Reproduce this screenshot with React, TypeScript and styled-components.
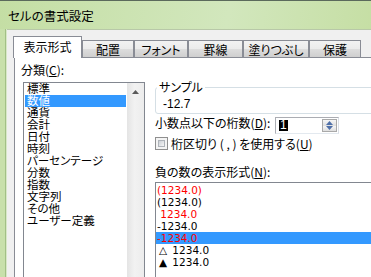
import React from "react";
import styled, { createGlobalStyle } from "styled-components";

const GlobalStyle = createGlobalStyle`
  html, body {
    margin: 0;
    padding: 0;
  }
  body {
    font-family: "Liberation Sans", "Noto Sans CJK JP", sans-serif;
    font-size: 12px;
    color: #000;
    font-feature-settings: "palt";
  }
`;

const Window = styled.div`
  width: 371px;
  height: 277px;
  overflow: hidden;
  box-sizing: border-box;
  border-top: 1px solid #5b6a5c;
  background: linear-gradient(100deg, #c4dea4 0%, #d2e7bd 55%, #c2dc9d 100%);
  display: flex;
  flex-direction: column;
`;

const TitleBar = styled.div`
  height: 28px;
  flex: none;
  display: flex;
  align-items: center;
  padding-left: 8px;
  font-family: "Noto Sans CJK JP", sans-serif;
  font-size: 12.5px;
`;

const Frame = styled.div`
  flex: 1;
  display: flex;
  min-height: 0;
`;

const FrameEdge = styled.div`
  width: 7px;
  flex: none;
  background: linear-gradient(to right, #c8e0ab 0 5px, #a2c086 5px 6px, #d8e8c8 6px);
`;

const Client = styled.div`
  flex: 1;
  display: flex;
  flex-direction: column;
  min-width: 0;
  background: #f0f0f0;
  border-top: 1px solid #b8c8a8;
`;

const TabRow = styled.div`
  display: flex;
  align-items: flex-end;
  height: 21px;
  margin-top: 6px;
  padding-left: 6px;
  position: relative;
  z-index: 1;
  flex: none;
`;

const Tab = styled.div<{ $active?: boolean; $w: number }>`
  box-sizing: border-box;
  width: ${(p) => p.$w}px;
  height: ${(p) => (p.$active ? 22 : 17)}px;
  margin-bottom: ${(p) => (p.$active ? -1 : 0)}px;
  border: 1px solid #898c95;
  border-bottom: none;
  background: ${(p) =>
    p.$active
      ? "#fff"
      : "linear-gradient(to bottom, #f2f2f2 0%, #ebebeb 50%, #dddddd 51%, #cfcfcf 100%)"};
  display: flex;
  align-items: center;
  justify-content: center;
  font-family: "Noto Sans CJK JP", sans-serif;
  font-size: 12px;
  line-height: 12px;
  padding-bottom: ${(p) => (p.$active ? 2 : 0)}px;
  padding-top: ${(p) => (p.$active ? 0 : 1)}px;
`;

const Panel = styled.div`
  flex: 1;
  margin-left: 7px;
  background: #fff;
  border-top: 1px solid #898c95;
  border-left: 1px solid #898c95;
  display: grid;
  grid-template-columns: 124px 1fr;
  column-gap: 10px;
  padding: 5px 0 0 6px;
  overflow: hidden;
  min-height: 0;
`;

const Column = styled.div`
  display: flex;
  flex-direction: column;
  min-width: 0;
`;

const Label = styled.div<{ $top?: number }>`
  line-height: 13px;
  height: 13px;
  margin-top: ${(p) => p.$top ?? 0}px;
  white-space: nowrap;
  font-family: "Noto Sans CJK JP", sans-serif;

  u {
    text-underline-offset: 1px;
  }
`;

const CategoryBox = styled.div`
  margin: 6px 0 0 2px;
  height: 200px;
  border: 1px solid #828790;
  display: flex;
`;

const CategoryList = styled.div`
  flex: 1;
  padding: 0 1px;
`;

const Item = styled.div<{ $selected?: boolean; $red?: boolean }>`
  height: 12px;
  line-height: 12px;
  font-size: 11.5px;
  padding-left: 2px;
  white-space: pre;
  background: ${(p) => (p.$selected ? "#3399ff" : "transparent")};
  color: ${(p) => (p.$red ? "#ff0000" : p.$selected ? "#fff" : "#000")};
`;

const ScrollTrack = styled.div`
  width: 17px;
  flex: none;
  background: linear-gradient(to right, #e4e4e4, #f2f2f2 45%, #ececec 100%);
  display: flex;
  justify-content: center;
  padding-top: 7px;
  box-sizing: border-box;
`;

const Sample = styled.fieldset`
  margin: 18px -20px 0 0;
  padding: 5px 0 3px 7px;
  border: 1px solid #d5dfe5;
  border-radius: 3px;
  min-width: 0;
`;

const Legend = styled.legend`
  padding: 0 2px;
  margin-left: -6px;
  line-height: 12px;
  font-family: "Noto Sans CJK JP", sans-serif;
`;

const SampleValue = styled.div`
  line-height: 12px;
  height: 12px;
`;

const DecimalRow = styled.div`
  display: flex;
  align-items: flex-start;
  margin-top: 3px;
`;

const DecimalLabel = styled(Label)`
  width: 120px;
  margin-top: -1px;
`;

const NumberBox = styled.div`
  box-sizing: border-box;
  width: 64px;
  height: 17px;
  border: 1px solid #abadb3;
  border-bottom-color: #e3e9ef;
  border-right-color: #dbdfe6;
  display: flex;
  align-items: center;
  padding-left: 3px;
`;

const SelectedDigit = styled.span`
  background: #000;
  color: #fff;
  line-height: 11px;
  padding: 0 1px;
`;

const Spinner = styled.div`
  margin-left: auto;
  margin-right: 1px;
  width: 15px;
  height: 13px;
  display: flex;
  flex-direction: column;
  border: 1px solid #a9a9a9;
  box-sizing: border-box;
`;

const SpinButton = styled.div`
  flex: 1;
  display: flex;
  align-items: center;
  justify-content: center;
  background: linear-gradient(to bottom, #f6f6f6, #dedede);
`;

const CheckRow = styled.div`
  display: flex;
  align-items: center;
  margin-top: 3px;
  gap: 3px;
`;

const CheckBox = styled.div`
  box-sizing: border-box;
  width: 13px;
  height: 13px;
  border: 1px solid #8f8f8f;
  padding: 2px;
  background: #f4f4f4;

  &::after {
    content: "";
    display: block;
    width: 100%;
    height: 100%;
    background: linear-gradient(135deg, #cbcfd5, #f6f6f6);
    border: 1px solid #aeb3b9;
    box-sizing: border-box;
  }
`;

const NegBox = styled.div`
  margin: 4px -20px 0 0;
  height: 200px;
  border: 1px solid #828790;
  padding-top: 1px;
`;

const NegItem = styled(Item)`
  padding-left: 1px;
  font-family: "DejaVu Sans", sans-serif;
  font-size: 10.5px;
`;

const Mark = styled.span`
  display: inline-block;
  width: 12px;
  text-align: center;
`;

const tabs = [
  { label: "表示形式", w: 69, active: true },
  { label: "配置", w: 52 },
  { label: "フォント", w: 54 },
  { label: "罫線", w: 55 },
  { label: "塗りつぶし", w: 66 },
  { label: "保護", w: 52 },
];

const categories = [
  "標準",
  "数値",
  "通貨",
  "会計",
  "日付",
  "時刻",
  "パーセンテージ",
  "分数",
  "指数",
  "文字列",
  "その他",
  "ユーザー定義",
];

const negatives: { mark?: string; text: string; red?: boolean; selected?: boolean }[] = [
  { text: "(1234.0)", red: true },
  { text: "(1234.0)" },
  { text: " 1234.0", red: true },
  { text: "-1234.0" },
  { text: "-1234.0", red: true, selected: true },
  { mark: "△", text: " 1234.0" },
  { mark: "▲", text: " 1234.0" },
];

function Triangle({ down, color }: { down?: boolean; color: string }) {
  return (
    <svg width="7" height="4" viewBox="0 0 7 4">
      <polygon
        points={down ? "0,0 7,0 3.5,4" : "3.5,0 7,4 0,4"}
        fill={color}
      />
    </svg>
  );
}

export default function App() {
  return (
    <>
      <GlobalStyle />
      <Window>
        <TitleBar>セルの書式設定</TitleBar>
        <Frame>
          <FrameEdge />
          <Client>
            <TabRow>
              {tabs.map((t) => (
                <Tab key={t.label} $active={t.active} $w={t.w}>
                  {t.label}
                </Tab>
              ))}
            </TabRow>
            <Panel>
              <Column>
                <Label>
                  分類(<u>C</u>):
                </Label>
                <CategoryBox>
                  <CategoryList>
                    {categories.map((c, i) => (
                      <Item key={c} $selected={i === 1}>
                        {c}
                      </Item>
                    ))}
                  </CategoryList>
                  <ScrollTrack>
                    <Triangle color="#5a5a5a" />
                  </ScrollTrack>
                </CategoryBox>
              </Column>
              <Column>
                <Sample>
                  <Legend>サンプル</Legend>
                  <SampleValue>-12.7</SampleValue>
                </Sample>
                <DecimalRow>
                  <DecimalLabel>
                    小数点以下の桁数(<u>D</u>):
                  </DecimalLabel>
                  <NumberBox>
                    <SelectedDigit>1</SelectedDigit>
                    <Spinner>
                      <SpinButton>
                        <Triangle color="#4f6fa8" />
                      </SpinButton>
                      <SpinButton>
                        <Triangle down color="#4f6fa8" />
                      </SpinButton>
                    </Spinner>
                  </NumberBox>
                </DecimalRow>
                <CheckRow>
                  <CheckBox />
                  <Label>
                    桁区切り ( , ) を使用する(<u>U</u>)
                  </Label>
                </CheckRow>
                <Label $top={15}>
                  負の数の表示形式(<u>N</u>):
                </Label>
                <NegBox>
                  {negatives.map((n, i) => (
                    <NegItem key={i} $red={n.red} $selected={n.selected}>
                      {n.mark && <Mark>{n.mark}</Mark>}
                      {n.text}
                    </NegItem>
                  ))}
                </NegBox>
              </Column>
            </Panel>
          </Client>
        </Frame>
      </Window>
    </>
  );
}
